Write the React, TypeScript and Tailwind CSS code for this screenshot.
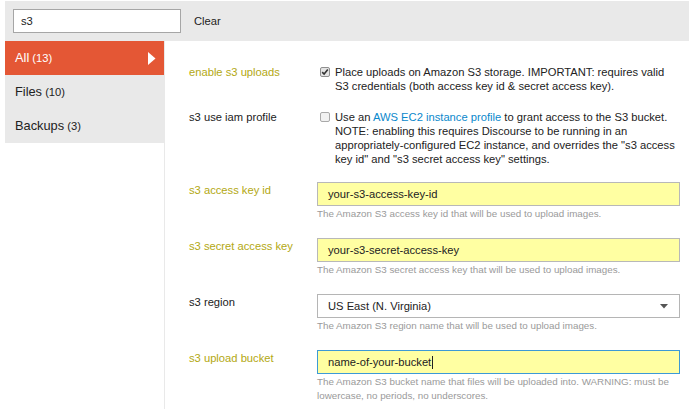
import React from 'react';

// Settings filter page: search bar, category sidebar, s3 settings list
const labelOverridden = 'text-[#b3a812]';

function Checkbox({ checked }: { checked?: boolean }) {
  return (
    <span
      className={
        'mt-[2px] ml-[3px] flex h-[10px] w-[10px] shrink-0 items-center justify-center rounded-[2px] border ' +
        (checked ? 'border-[#8f8f8f] bg-[#e4e4e4]' : 'border-[#a9a9a9] bg-[#f1f1f1]')
      }
    >
      {checked && (
        <svg width="8" height="8" viewBox="0 0 8 8">
          <path d="M1.2 4.2 L3.1 6 L6.8 1.6" fill="none" stroke="#333" strokeWidth="1.6" />
        </svg>
      )}
    </span>
  );
}

function TextSetting({
  label,
  value,
  help,
  overridden = true,
  focused,
  select,
}: {
  label: string;
  value: string;
  help: string;
  overridden?: boolean;
  focused?: boolean;
  select?: boolean;
}) {
  return (
    <div className="mb-[17px] flex">
      <div className={'mt-[1px] w-[128px] shrink-0 ' + (overridden ? labelOverridden : 'text-[#222]')}>{label}</div>
      <div className="w-[363px]">
        <div
          className={
            'flex h-[24px] items-center border pl-[10px] pr-[10px] text-[#222] ' +
            (select ? 'border-[#b5b5b5] bg-white ' : 'bg-[#ffffa2] ') +
            (focused ? 'border-[#3d9ad6]' : select ? '' : 'border-[#b8b8b8]')
          }
        >
          <span>{value}</span>
          {focused && <span className="ml-[1px] h-[13px] w-px bg-[#222]" />}
          {select && (
            <svg className="ml-auto mr-[1px]" width="8" height="5" viewBox="0 0 8 5">
              <path d="M0 0 H8 L4 4.5 Z" fill="#555" />
            </svg>
          )}
        </div>
        <div className="mt-[1px] text-[9.8px] leading-[14px] text-[#9a9a9a]">{help}</div>
      </div>
    </div>
  );
}

export default function App() {
  return (
    <div
      className="h-[409px] w-[690px] overflow-hidden bg-white pl-[5px] pr-px pt-px text-[11.2px] leading-[14px] text-[#222]"
      style={{ fontFamily: '"Liberation Sans", Arial, sans-serif' }}
    >
      {/* Search bar */}
      <div className="flex h-[40px] items-center bg-[#e9e9e9] pl-[8px]">
        <div className="flex h-[24px] w-[168px] items-center border border-[#a6a6a6] bg-white pl-[7px]">s3</div>
        <span className="ml-[13px]">Clear</span>
      </div>

      <div className="flex">
        {/* Sidebar */}
        <div className="w-[159px] shrink-0 self-start bg-[#e9e9e9]">
          <div className="flex h-[34px] items-center justify-between bg-[#e45735] pl-[10px] pr-[8px] text-white">
            <span>
              <span className="text-[12.8px]">All</span> <span>(13)</span>
            </span>
            <svg width="8" height="13" viewBox="0 0 8 13">
              <path d="M0 0 L7.5 6.5 L0 13 Z" fill="#fff" />
            </svg>
          </div>
          <div className="flex h-[34px] items-center pl-[10px]">
            <span>
              <span className="text-[12.8px]">Files</span> <span>(10)</span>
            </span>
          </div>
          <div className="flex h-[34px] items-center pl-[10px]">
            <span>
              <span className="text-[12.8px]">Backups</span> <span>(3)</span>
            </span>
          </div>
        </div>

        {/* Settings */}
        <div className="h-[368px] flex-1 border-l border-[#e9e9e9] pl-[24px] pt-[24px]">
          <div className="mb-[17px] flex">
            <div className={'w-[128px] shrink-0 ' + labelOverridden}>enable s3 uploads</div>
            <div className="flex w-[363px] gap-[5px]">
              <Checkbox checked />
              <p>
                Place uploads on Amazon S3 storage. IMPORTANT: requires valid S3 credentials (both access key id &amp;
                secret access key).
              </p>
            </div>
          </div>

          <div className="mb-[16px] flex">
            <div className="w-[128px] shrink-0">s3 use iam profile</div>
            <div className="flex w-[363px] gap-[5px]">
              <Checkbox />
              <p>
                Use an <a className="text-[#0a88cc]">AWS EC2 instance profile</a> to grant access to the S3 bucket.
                NOTE: enabling this requires Discourse to be running in an appropriately-configured EC2 instance, and
                overrides the "s3 access key id" and "s3 secret access key" settings.
              </p>
            </div>
          </div>

          <TextSetting
            label="s3 access key id"
            value="your-s3-access-key-id"
            help="The Amazon S3 access key id that will be used to upload images."
          />
          <TextSetting
            label="s3 secret access key"
            value="your-s3-secret-access-key"
            help="The Amazon S3 secret access key that will be used to upload images."
          />
          <TextSetting
            label="s3 region"
            value="US East (N. Virginia)"
            help="The Amazon S3 region name that will be used to upload images."
            overridden={false}
            select
          />
          <TextSetting
            label="s3 upload bucket"
            value="name-of-your-bucket"
            help="The Amazon S3 bucket name that files will be uploaded into. WARNING: must be lowercase, no periods, no underscores."
            focused
          />
        </div>
      </div>
    </div>
  );
}
